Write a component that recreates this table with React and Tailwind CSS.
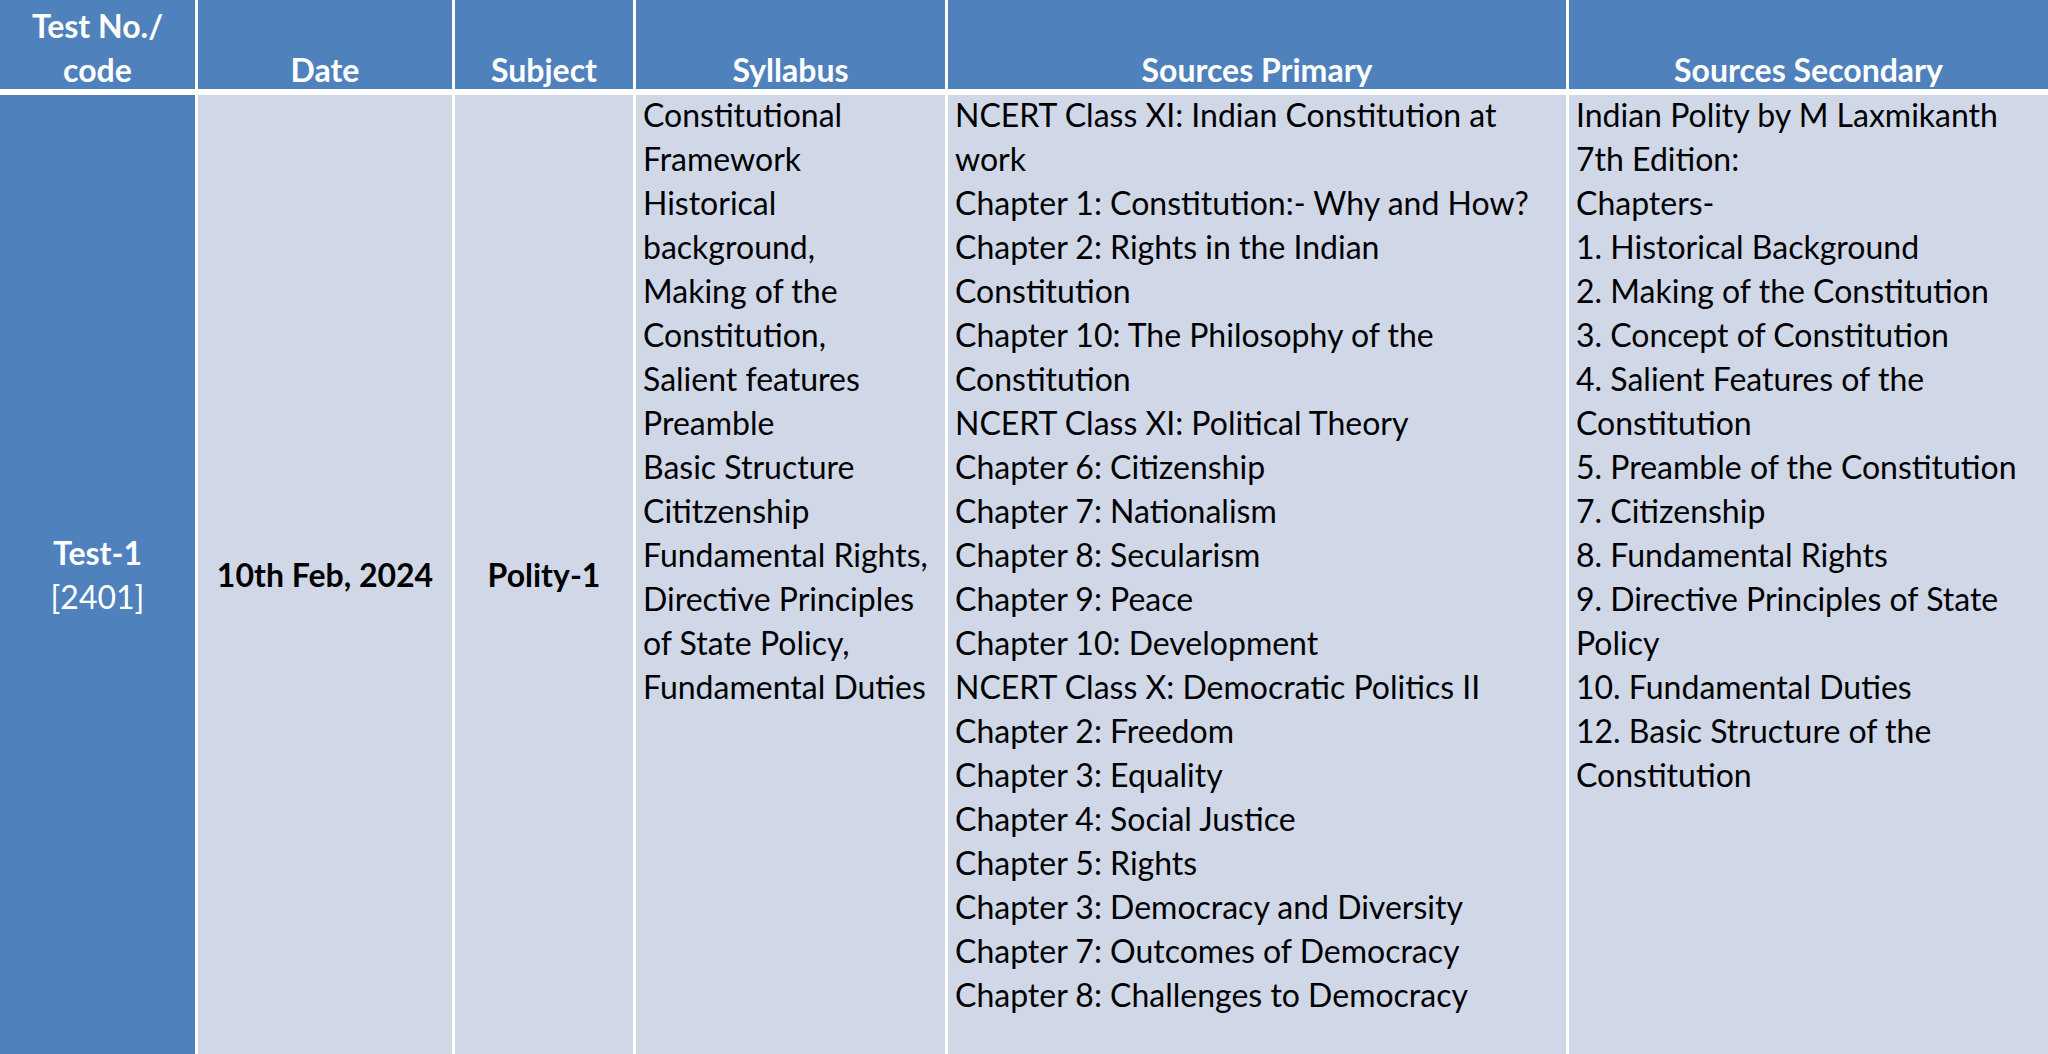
import React from "react";

const syllabus = [
  "Constitutional",
  "Framework",
  "Historical",
  "background,",
  "Making of the",
  "Constitution,",
  "Salient features",
  "Preamble",
  "Basic Structure",
  "Cititzenship",
  "Fundamental Rights,",
  "Directive Principles",
  "of State Policy,",
  "Fundamental Duties",
];

const primary = [
  "NCERT Class XI: Indian Constitution at",
  "work",
  "Chapter 1: Constitution:- Why and How?",
  "Chapter 2: Rights in the Indian",
  "Constitution",
  "Chapter 10: The Philosophy of the",
  "Constitution",
  "NCERT Class XI: Political Theory",
  "Chapter 6: Citizenship",
  "Chapter 7: Nationalism",
  "Chapter 8: Secularism",
  "Chapter 9: Peace",
  "Chapter 10: Development",
  "NCERT Class X: Democratic Politics II",
  "Chapter 2: Freedom",
  "Chapter 3: Equality",
  "Chapter 4: Social Justice",
  "Chapter 5: Rights",
  "Chapter 3: Democracy and Diversity",
  "Chapter 7: Outcomes of Democracy",
  "Chapter 8: Challenges to Democracy",
];

const secondary = [
  "Indian Polity by M Laxmikanth",
  "7th Edition:",
  "Chapters-",
  "1. Historical Background",
  "2. Making of the Constitution",
  "3. Concept of Constitution",
  "4. Salient Features of the",
  "Constitution",
  "5. Preamble of the Constitution",
  "7. Citizenship",
  "8. Fundamental Rights",
  "9. Directive Principles of State",
  "Policy",
  "10. Fundamental Duties",
  "12. Basic Structure of the",
  "Constitution",
];

const HeadCell = ({ lines }) => (
  <div className="bg-[#4f81bd] flex flex-col justify-end items-center text-center text-white font-bold">
    <div className="-mb-[3px]">
      {lines.map((l) => (
        <div key={l} className="whitespace-nowrap">
          {l}
        </div>
      ))}
    </div>
  </div>
);

const ListCell = ({ lines }) => (
  <div className="bg-[#d0d8e8] pl-[7px] -mt-0 text-black">
    <div className="-mt-[2px]">
      {lines.map((l, i) => (
        <div key={i} className="whitespace-nowrap">
          {l}
        </div>
      ))}
    </div>
  </div>
);

const App = () => {
  return (
    <div
      className="w-[2048px] h-[1054px] bg-white grid grid-cols-[195px_254px_178px_309px_618px_479px] grid-rows-[89px_959px] gap-x-[3px] gap-y-[6px] overflow-hidden text-[32px] leading-[44px]"
      style={{ fontFamily: "Lato, 'Open Sans', sans-serif" }}
    >
      <HeadCell lines={["Test No./", "code"]} />
      <HeadCell lines={["Date"]} />
      <HeadCell lines={["Subject"]} />
      <HeadCell lines={["Syllabus"]} />
      <HeadCell lines={["Sources Primary"]} />
      <HeadCell lines={["Sources Secondary"]} />

      <div className="bg-[#4f81bd] flex flex-col justify-center items-center text-white font-bold text-center">
        <div>Test-1</div>
        <div className="font-normal">[2401]</div>
      </div>
      <div className="bg-[#d0d8e8] flex justify-center items-center font-bold text-black whitespace-nowrap">
        10th Feb, 2024
      </div>
      <div className="bg-[#d0d8e8] flex justify-center items-center font-bold text-black whitespace-nowrap">
        Polity-1
      </div>
      <ListCell lines={syllabus} />
      <ListCell lines={primary} />
      <ListCell lines={secondary} />
    </div>
  );
};

export default App;
